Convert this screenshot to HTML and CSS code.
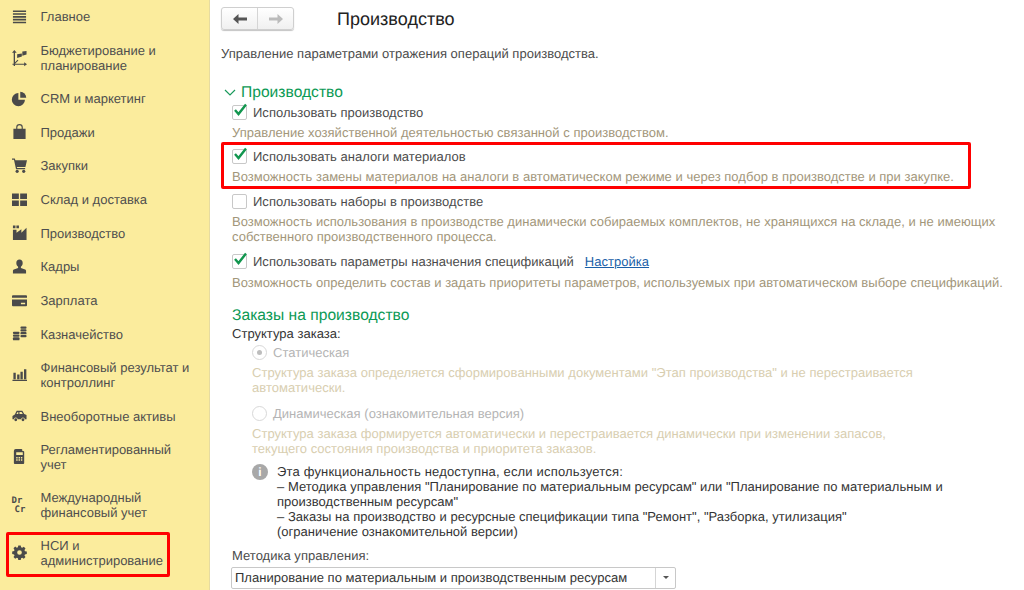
FILE: index.html
```html
<!DOCTYPE html>
<html lang="ru">
<head>
    <meta charset="UTF-8">
    <title>Производство</title>
    <link rel="stylesheet" href="styles.css">
</head>
<body>
    <div class="sidebar">
        <div class="nav-item">
            <svg class="nav-icon" viewBox="0 0 16 16"><path d="M1 1.500h14v1.700H1zM1 4.500h14v1.700H1zM1 7.500h14v1.700H1zM1 10.500h14v1.700H1zM1 13.500h14v1.700H1z"/></svg>
            <span>Главное</span>
        </div>
        <div class="nav-item">
            <svg class="nav-icon" viewBox="0 0 16 16"><path d="M2.500 0L5 3H3.200v10.100L6 10.300l.8.800-3.600 3.500H13V13l3 2.200-3 2.200v-1.600H3.200V17H1.800v-1.200H.5v-1.200h1.300V3H0zM5.500 4.500l5-.8V7l-5 1.500zM11 1.500l4.500-.5v3.700L11 6z"/></svg>
            <span>Бюджетирование и<br>планирование</span>
        </div>
        <div class="nav-item">
            <svg class="nav-icon" viewBox="0 0 16 16"><path d="M6.800 2.200a7 7 0 1 0 7 7h-7z"/><path d="M8.800.8a6.500 6.500 0 0 1 6.400 6.400H8.800z"/></svg>
            <span>CRM и маркетинг</span>
        </div>
        <div class="nav-item">
            <svg class="nav-icon" viewBox="0 0 16 16"><path d="M1.500 5h3V3.500a3.500 3.500 0 0 1 7 0V5h3v11h-13zM5.700 5h4.600V3.500a2.300 2.300 0 0 0-4.600 0z"/></svg>
            <span>Продажи</span>
        </div>
        <div class="nav-item">
            <svg class="nav-icon" viewBox="0 0 16 16"><path d="M0 .5h3l.6 2H16l-1.700 7H5.200l.3 1.200H14V12H4.300L2.100 1.800H0z"/><circle cx="5.500" cy="14.200" r="1.700"/><circle cx="12.500" cy="14.200" r="1.700"/></svg>
            <span>Закупки</span>
        </div>
        <div class="nav-item">
            <svg class="nav-icon" viewBox="0 0 16 16"><path d="M0 1.500h7.300V7.500H0zM8.700 1.500H16V7.500H8.700zM0 9h7.300v6H0zM8.700 9H16v6H8.700z"/></svg>
            <span>Склад и доставка</span>
        </div>
        <div class="nav-item">
            <svg class="nav-icon" viewBox="0 0 16 16"><path d="M1 .5h2.700v3H1zM4.700.5h2.700v3H4.700zM1 5h3.800v3.200L10 4.500v3.700L15.500 3v13H1z"/></svg>
            <span>Производство</span>
        </div>
        <div class="nav-item">
            <svg class="nav-icon" viewBox="0 0 16 16"><path d="M8 .5c2.200 0 3.400 1.500 3.400 3.700 0 1.800-.8 3.300-1.900 4v1.300l4.500 1.800c.8.300 1 1 1 1.700v2.500H1V13c0-.7.200-1.400 1-1.700l4.500-1.800V8.200c-1.100-.7-1.900-2.200-1.900-4C4.600 2 5.800.5 8 .5z"/></svg>
            <span>Кадры</span>
        </div>
        <div class="nav-item">
            <svg class="nav-icon" viewBox="0 0 16 16"><path d="M1 2.500h14a1 1 0 0 1 1 1v1.500H0V3.500a1 1 0 0 1 1-1zM0 7h16v6a1 1 0 0 1-1 1H1a1 1 0 0 1-1-1zm9.500 3.500V12h4.500v-1.500z" fill-rule="evenodd"/></svg>
            <span>Зарплата</span>
        </div>
        <div class="nav-item">
            <svg class="nav-icon" viewBox="0 0 16 16"><rect x="9" y="0.500" width="6.500" height="2.400" rx="1"/><rect x="9" y="3.500" width="6.500" height="2.400" rx="1"/><rect x="9" y="6.500" width="6.500" height="2.400" rx="1"/><rect x="9" y="9.500" width="6.500" height="2.400" rx="1"/><rect x="1" y="6" width="7" height="2.400" rx="1"/><rect x="1" y="9" width="7" height="2.400" rx="1"/><rect x="1" y="12" width="7" height="3.300" rx="1"/></svg>
            <span>Казначейство</span>
        </div>
        <div class="nav-item">
            <svg class="nav-icon" viewBox="0 0 16 16"><path d="M1.500 6h2.500v7H1.500zM5.500 8H8v5H5.500zM9 5h2.500v8H9zM12.800 2.500h2.500V13h-2.500zM.5 13.500h15.500V15H.5z"/></svg>
            <span>Финансовый результат и<br>контроллинг</span>
        </div>
        <div class="nav-item">
            <svg class="nav-icon" viewBox="0 0 16 16"><path fill-rule="evenodd" d="M5 3h6l2 3.500 2.500 1V12h-1.800a2 2 0 0 0-4 0H6a2 2 0 0 0-4 0H.5V8.500L3 7zm1 1.200L4.700 6.500h2V4.200zm2 0v2.300h3.500l-1.300-2.300z"/><circle cx="4" cy="12.500" r="1.500"/><circle cx="11.700" cy="12.500" r="1.500"/></svg>
            <span>Внеоборотные активы</span>
        </div>
        <div class="nav-item">
            <svg class="nav-icon" viewBox="0 0 16 16"><path d="M4 0h6a1 1 0 0 1 1 1v1h1a1 1 0 0 1 1 1v12a1 1 0 0 1-1 1H3a1 1 0 0 1-1-1V2a2 2 0 0 1 2-2zm.500 3.500v3h7v-3zm0 5v1.500h1.500V8.500zm2.500 0v1.500h1.500V8.500zm2.500 0v1.500h1.500V8.500zm-5 2.500v1.500h1.500V11zm2.500 0v1.500h1.500V11zm2.500 0v1.500h1.500V11z" fill-rule="evenodd"/></svg>
            <span>Регламентированный<br>учет</span>
        </div>
        <div class="nav-item">
            <div class="nav-icon dr-cr"><b>Dr</b><b class="cr">Cr</b></div>
            <span>Международный<br>финансовый учет</span>
        </div>
        <div class="nav-item nav-marked">
            <svg class="nav-icon" viewBox="0 0 16 16"><path fill-rule="evenodd" d="M6.700.5h2.600l.4 2 1.200.5 1.700-1.100 1.800 1.800-1.100 1.700.5 1.200 2 .4v2.600l-2 .4-.5 1.200 1.100 1.700-1.800 1.800-1.700-1.100-1.200.5-.4 2H6.700l-.4-2-1.200-.5-1.700 1.100-1.800-1.800 1.100-1.700-.5-1.200-2-.4V6.800l2-.4.500-1.200-1.100-1.700 1.800-1.800 1.700 1.100 1.200-.5zM8 5.500a2.500 2.500 0 1 0 0 5 2.500 2.500 0 0 0 0-5z"/></svg>
            <span>НСИ и<br>администрирование</span>
        </div>
    </div>

    <div class="main-content">
        <div class="page-head">
            <div class="nav-buttons">
                <div class="nav-btn">
                    <svg width="14" height="10" viewBox="0 0 14 10"><path d="M5.500 0v3.500H14v3H5.500V10L0 5z" fill="#555"/></svg>
                </div>
                <div class="nav-btn">
                    <svg width="14" height="10" viewBox="0 0 14 10"><path d="M8.500 0v3.500H0v3h8.500V10L14 5z" fill="#bbb"/></svg>
                </div>
            </div>
            <h1>Производство</h1>
        </div>
        <p class="page-desc">Управление параметрами отражения операций производства.</p>

        <div class="group-title group-first">
            <svg width="12" height="8" viewBox="0 0 12 8"><path d="M1 1l5 5 5-5" fill="none" stroke="#1a9a5c" stroke-width="1.200"/></svg>
            <span>Производство</span>
        </div>

        <div class="option">
            <div class="check-row">
                <span class="check on"><svg width="16" height="15" viewBox="0 0 16 15"><path d="M3 7l3.500 4L14 1.500" fill="none" stroke="#12964f" stroke-width="2.400"/></svg></span>
                <span>Использовать производство</span>
            </div>
            <div class="hint">Управление хозяйственной деятельностью связанной с производством.</div>
        </div>

        <div class="option marked">
            <div class="check-row">
                <span class="check on"><svg width="16" height="15" viewBox="0 0 16 15"><path d="M3 7l3.500 4L14 1.500" fill="none" stroke="#12964f" stroke-width="2.400"/></svg></span>
                <span>Использовать аналоги материалов</span>
            </div>
            <div class="hint">Возможность замены материалов на аналоги в автоматическом режиме и через подбор в производстве и при закупке.</div>
        </div>

        <div class="option option-spaced">
            <div class="check-row">
                <span class="check"></span>
                <span>Использовать наборы в производстве</span>
            </div>
            <div class="hint">Возможность использования в производстве динамически собираемых комплектов, не хранящихся на складе, и не имеющих<br>собственного производственного процесса.</div>
        </div>

        <div class="option option-spaced">
            <div class="check-row">
                <span class="check on"><svg width="16" height="15" viewBox="0 0 16 15"><path d="M3 7l3.500 4L14 1.500" fill="none" stroke="#12964f" stroke-width="2.400"/></svg></span>
                <span>Использовать параметры назначения спецификаций</span>
                <a class="link" href="#">Настройка</a>
            </div>
            <div class="hint hint-low">Возможность определить состав и задать приоритеты параметров, используемых при автоматическом выборе спецификаций.</div>
        </div>

        <div class="group-title group-orders">Заказы на производство</div>
        <div class="field-label">Структура заказа:</div>

        <div class="radio-block">
            <div class="radio-row">
                <span class="radio selected"></span>
                <span>Статическая</span>
            </div>
            <div class="hint-off">Структура заказа определяется сформированными документами "Этап производства" и не перестраивается<br>автоматически.</div>
            <div class="radio-row radio-second">
                <span class="radio"></span>
                <span>Динамическая (ознакомительная версия)</span>
            </div>
            <div class="hint-off">Структура заказа формируется автоматически и перестраивается динамически при изменении запасов,<br>текущего состояния производства и приоритета заказов.</div>
        </div>

        <div class="notice">
            <span class="info-icon">i</span>
            <div><span class="notice-head">Эта функциональность недоступна, если используется:</span><br>– Методика управления "Планирование по материальным ресурсам" или "Планирование по материальным и<br>производственным ресурсам"<br>– Заказы на производство и ресурсные спецификации типа "Ремонт", "Разборка, утилизация"<br>(ограничение ознакомительной версии)</div>
        </div>

        <div class="method-label">Методика управления:</div>
        <div class="select">
            <span class="select-value">Планирование по материальным и производственным ресурсам</span>
            <span class="select-btn"></span>
        </div>
    </div>
</body>
</html>
```

FILE: styles.css
```css
*, *::after {
    box-sizing: border-box;
}

html, body {
    height: 100%;
}

body {
    margin: 0;
    display: flex;
    height: 590px;
    overflow: hidden;
    background-color: #ffffff;
    color: #4b4b4b;
    font-family: "Liberation Sans", Arial, sans-serif;
    font-size: 13px;
    line-height: 15px;
    text-rendering: geometricPrecision;
}

.sidebar {
    width: 210px;
    flex-shrink: 0;
    background-color: #fbec9d;
    border-right: 1px solid #e6dba0;
}

.nav-item {
    position: relative;
    display: flex;
    align-items: center;
    min-height: 33.7px;
    padding-left: 40.5px;
    color: #4e4e4e;
}

.nav-item:has(br) {
    min-height: 48px;
}

.nav-icon {
    position: absolute;
    left: 11.5px;
    top: 50%;
    width: 15px;
    height: 15px;
    margin-top: -8px;
    fill: #4a4a4a;
    overflow: visible;
}

.dr-cr {
    display: flex;
    flex-direction: column;
    color: #4a4a4a;
    font-family: "DejaVu Sans Mono", monospace;
    font-size: 9px;
    line-height: 9px;
}

.dr-cr .cr {
    margin-left: 3px;
}

.nav-marked::after {
    content: "";
    position: absolute;
    left: 6px;
    top: 3px;
    width: 164px;
    height: 45px;
    border: 3px solid #ff0000;
    border-radius: 2px;
}

.main-content {
    flex-grow: 1;
    min-width: 0;
    padding: 6px 0 0 11px;
    white-space: nowrap;
    letter-spacing: 0.02px;
}

.page-head {
    display: flex;
    align-items: center;
    height: 26px;
}

.nav-buttons {
    display: flex;
    width: 73px;
    height: 23px;
    margin-bottom: 1px;
    border: 1px solid #cfcfcf;
    border-radius: 3px;
    background: linear-gradient(#ffffff, #f0f0f0);
    box-shadow: 0 1px 1px #c4c4c4;
}

.nav-btn {
    flex: 1;
    display: flex;
    align-items: center;
    justify-content: center;
}

.nav-btn + .nav-btn {
    border-left: 1px solid #d5d5d5;
}

h1 {
    margin: 0 0 0 43px;
    color: #222222;
    font-size: 18px;
    font-weight: normal;
}

.page-desc {
    margin: 14px 0 0 0;
}

.group-title {
    color: #0c9a55;
    font-size: 15.6px;
    line-height: 18px;
}

.group-first {
    display: flex;
    align-items: center;
    gap: 5px;
    margin: 23px 0 0 3px;
}

.option-spaced {
    padding-top: 1px;
}

.check-row {
    display: flex;
    align-items: center;
    gap: 6px;
    height: 20px;
}

.check {
    position: relative;
    width: 15px;
    height: 15px;
    margin-left: 11px;
    border: 1px solid #c8c8c8;
    border-radius: 2px;
    background-color: #ffffff;
    flex-shrink: 0;
}

.check svg {
    position: absolute;
    left: -1px;
    top: -3px;
}

.hint {
    margin: 3px 0 6px 11px;
    color: #a2967a;
}

.hint-low {
    margin-top: 4px;
}

.marked {
    position: relative;
}

.marked::after {
    content: "";
    position: absolute;
    left: 0;
    top: -4px;
    width: 750px;
    height: 47px;
    border: 3px solid #ff0000;
    border-radius: 2px;
}

.link {
    margin-left: 5px;
    color: #1a5fa8;
}

.group-orders {
    margin: 17px 0 0 11px;
}

.field-label {
    margin: 1px 0 0 11px;
    color: #333333;
}

.radio-block {
    margin-left: 31px;
    color: #b4b4b4;
}

.radio-row {
    display: flex;
    align-items: center;
    gap: 6px;
    height: 20px;
    margin-top: 1px;
}

.radio-second {
    margin-top: 8px;
}

.radio {
    position: relative;
    width: 15px;
    height: 15px;
    border: 1px solid #d8d8d8;
    border-radius: 50%;
}

.radio.selected::after {
    content: "";
    position: absolute;
    left: 4px;
    top: 4px;
    width: 5px;
    height: 5px;
    border-radius: 50%;
    background-color: #bdbdbd;
}

.hint-off {
    margin-top: 3px;
    color: #d8ceb0;
}

.notice {
    display: flex;
    gap: 9px;
    margin: 8px 0 0 31px;
    color: #333333;
}

.notice-head {
    letter-spacing: 0.18px;
}

.info-icon {
    flex-shrink: 0;
    width: 16px;
    height: 16px;
    border-radius: 50%;
    background-color: #a8a8a8;
    color: #ffffff;
    font-weight: bold;
    font-size: 12px;
    line-height: 16px;
    text-align: center;
}

.method-label {
    margin: 9px 0 0 11px;
}

.select {
    display: flex;
    width: 445px;
    height: 22px;
    margin: 4px 0 0 10px;
    border: 1px solid #c8c8c8;
    border-radius: 2px;
    color: #333333;
    line-height: 20px;
}

.select-value {
    flex-grow: 1;
    padding-left: 3px;
}

.select-btn {
    position: relative;
    width: 20px;
    border-left: 1px solid #d5d5d5;
}

.select-btn::after {
    content: "";
    position: absolute;
    left: 7px;
    top: 8px;
    border-left: 3px solid transparent;
    border-right: 3px solid transparent;
    border-top: 3px solid #555555;
}
```
